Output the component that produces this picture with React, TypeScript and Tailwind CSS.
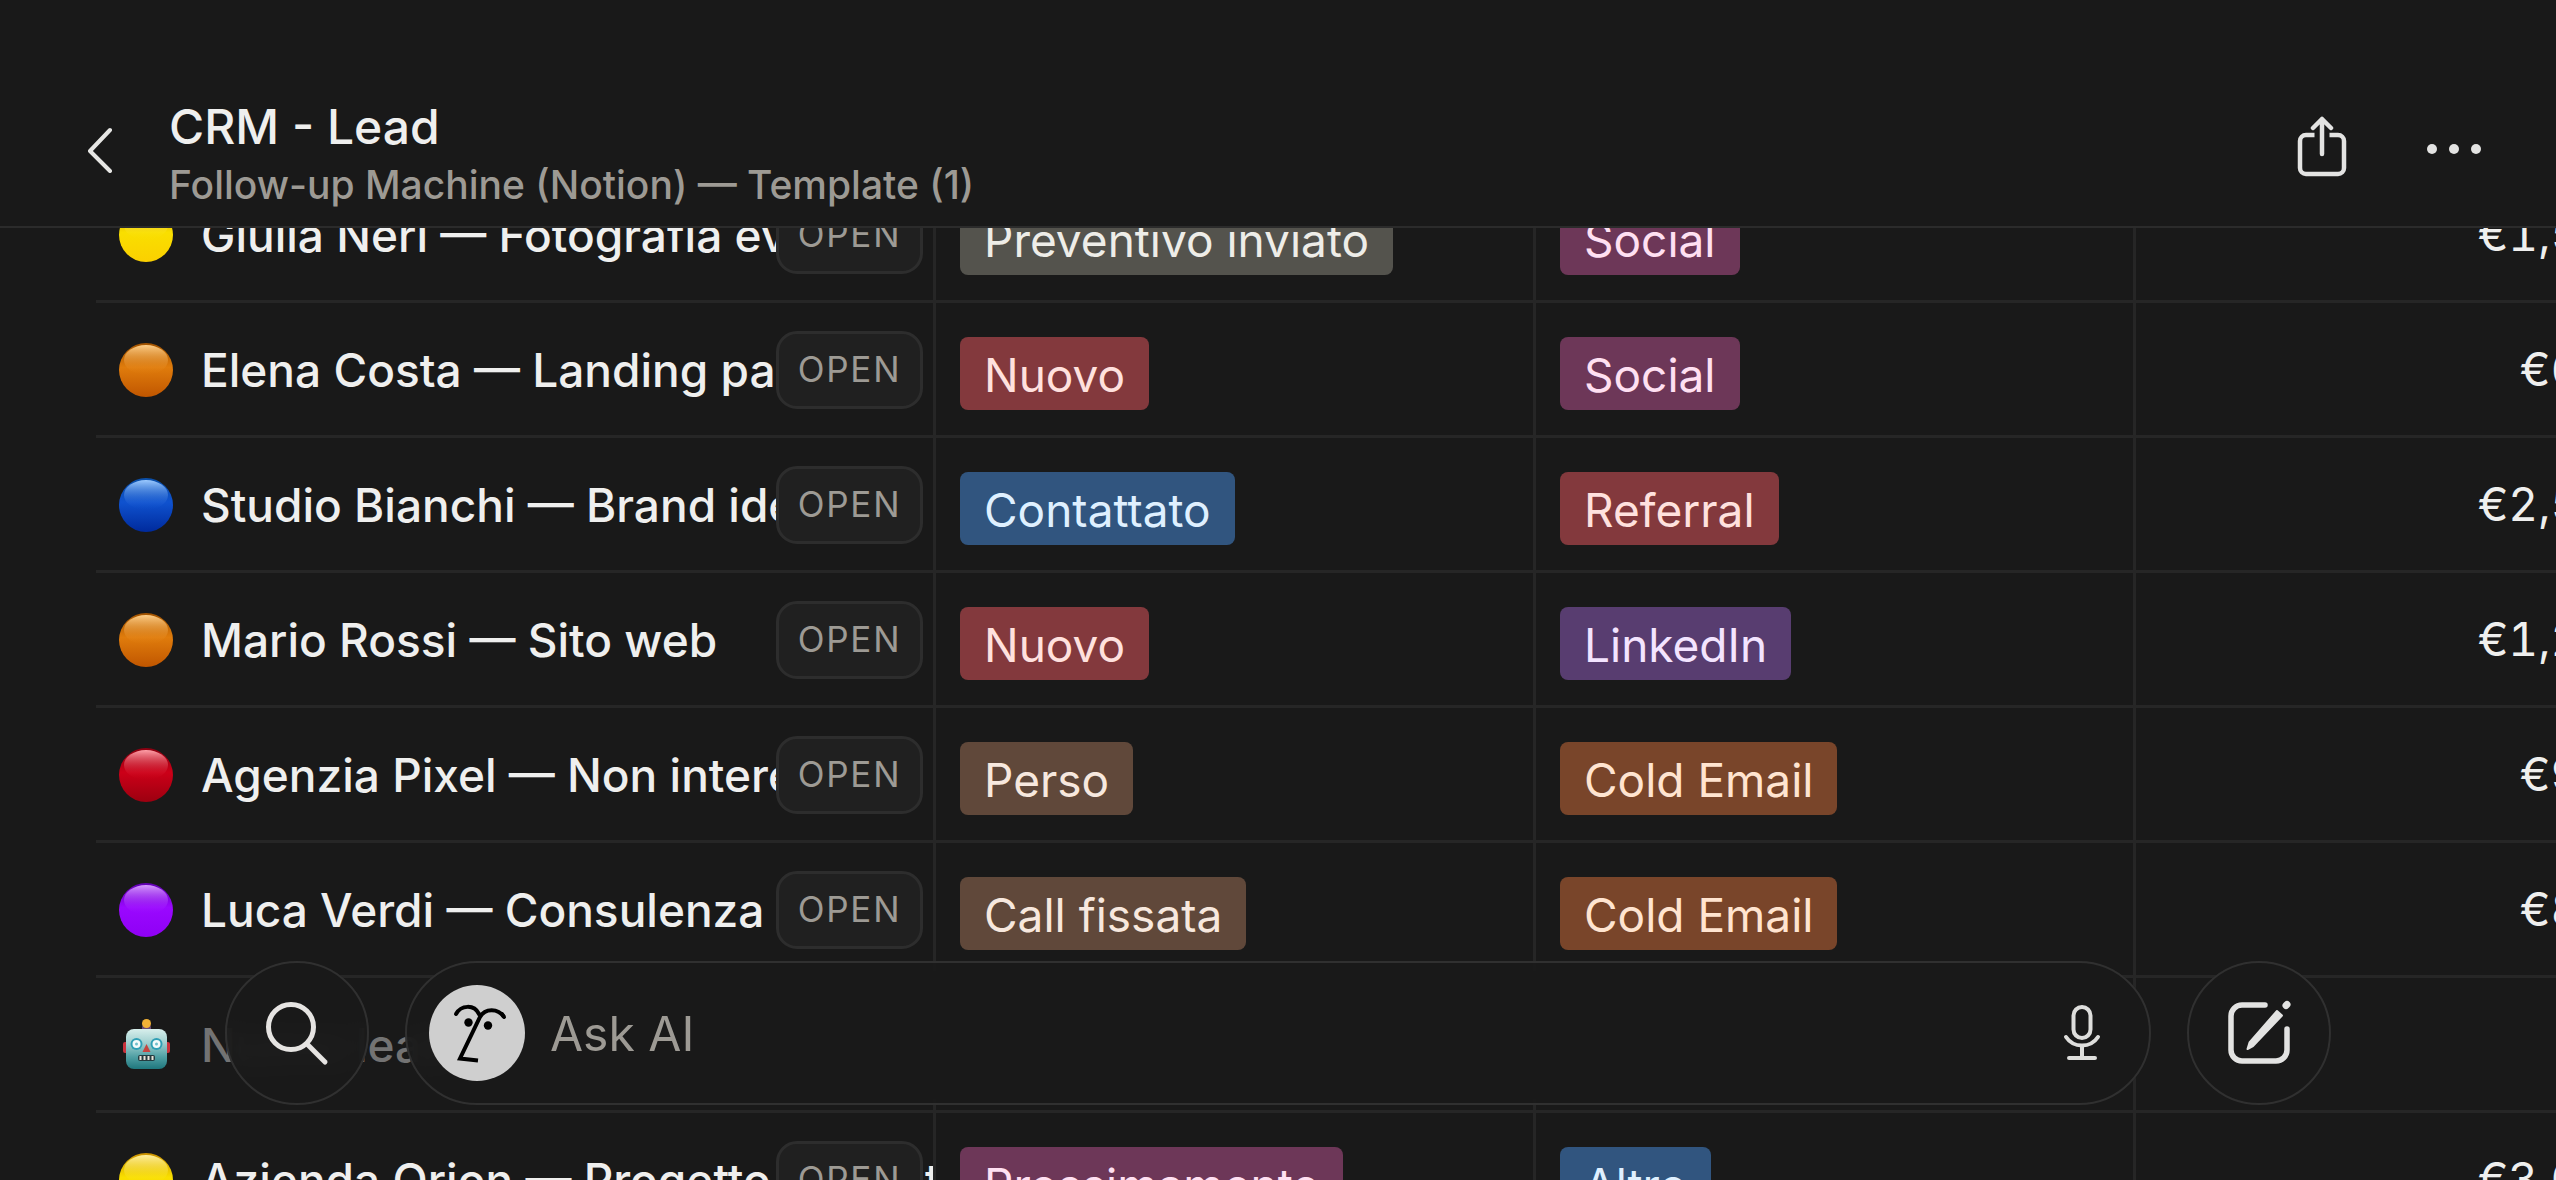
import React from "react";

type Dot = "yellow" | "orange" | "blue" | "red" | "purple";

const dotStops: Record<Dot, [string, string, string, string]> = {
  yellow: ["#c98f00", "#fff0a0", "#f9df00", "#fbd000"],
  orange: ["#a05200", "#ffd08a", "#e07c0c", "#c05600"],
  blue: ["#0a4fa8", "#9ccaff", "#0f52cf", "#002a9c"],
  red: ["#8a0010", "#ffa0a8", "#cc0018", "#9c0010"],
  purple: ["#5f00b0", "#d79cff", "#9a08ff", "#8f00f5"],
};

function Ball({ color }: { color: Dot }) {
  const [rim, shine, body, base] = dotStops[color];
  return (
    <svg viewBox="0 0 54 54" className="size-[54px] shrink-0" aria-hidden="true">
      <defs>
        <linearGradient id={`body-${color}`} x1="0" y1="0" x2="0" y2="1">
          <stop offset="0" stopColor={rim} />
          <stop offset="0.45" stopColor={body} />
          <stop offset="1" stopColor={base} />
        </linearGradient>
        <linearGradient id={`shine-${color}`} x1="0" y1="0" x2="0" y2="1">
          <stop offset="0" stopColor={shine} />
          <stop offset="1" stopColor={body} stopOpacity="0" />
        </linearGradient>
      </defs>
      <circle cx="27" cy="27" r="27" fill={`url(#body-${color})`} />
      <ellipse cx="27" cy="17" rx="22" ry="15" fill={`url(#shine-${color})`} />
    </svg>
  );
}

function Robot() {
  return (
    <svg viewBox="0 0 54 54" className="size-[54px] shrink-0" aria-hidden="true">
      <defs>
        <linearGradient id="robot-face" x1="0" y1="0" x2="0" y2="1">
          <stop offset="0" stopColor="#d8efec" />
          <stop offset="0.35" stopColor="#9fcfcf" />
          <stop offset="0.7" stopColor="#4f9fa3" />
          <stop offset="1" stopColor="#1f777d" />
        </linearGradient>
      </defs>
      <rect x="23" y="7" width="9" height="6" rx="2" fill="#6a4a72" />
      <circle cx="27.500" cy="5.500" r="4.500" fill="#f2b236" />
      <rect x="4" y="24" width="5" height="11" rx="2" fill="#c8323c" />
      <rect x="46" y="24" width="5" height="11" rx="2" fill="#c8323c" />
      <rect x="7" y="11" width="41" height="40" rx="8" fill="url(#robot-face)" />
      <circle cx="17.500" cy="26" r="6" fill="#2f9fb5" />
      <circle cx="37.500" cy="26" r="6" fill="#2f9fb5" />
      <circle cx="17.500" cy="26" r="4" fill="#f3fbfb" />
      <circle cx="37.500" cy="26" r="4" fill="#f3fbfb" />
      <circle cx="17.500" cy="26" r="1.500" fill="#6fc0cc" />
      <circle cx="37.500" cy="26" r="1.500" fill="#6fc0cc" />
      <path d="M27.500 26l4 8h-8z" fill="#c5453f" />
      <rect x="19" y="37" width="17" height="6" rx="2" fill="#243c40" />
      <path d="M21.500 38v4M25.500 38v4M29.500 38v4M33.500 38v4" stroke="#e9e4d8" strokeWidth="2" />
    </svg>
  );
}

type TagColor = "gray" | "red" | "blue" | "brown" | "orange" | "pink" | "purple";

const tagClass: Record<TagColor, string> = {
  gray: "bg-[#54534d] text-[#eeede8]",
  red: "bg-[#83393d] text-[#ffe1de]",
  blue: "bg-[#31557f] text-[#dff0ff]",
  brown: "bg-[#60483a] text-[#f7e8de]",
  orange: "bg-[#79452a] text-[#ffe4d0]",
  pink: "bg-[#6d3758] text-[#ffe0f2]",
  purple: "bg-[#583d70] text-[#f3e4ff]",
};

function Tag({ color, children }: { color: TagColor; children: React.ReactNode }) {
  return (
    <span
      className={`inline-flex h-[73px] items-center whitespace-nowrap rounded-lg px-6 pt-0.5 text-[46px] leading-none ${tagClass[color]}`}
    >
      {children}
    </span>
  );
}

interface Lead {
  icon: Dot | "robot";
  name: string;
  status?: [TagColor, string];
  source?: [TagColor, string];
  value?: string;
  muted?: boolean;
}

const leads: Lead[] = [
  { icon: "yellow", name: "Giulia Neri — Fotografia ev", status: ["gray", "Preventivo inviato"], source: ["pink", "Social"], value: "€1,500.00" },
  { icon: "orange", name: "Elena Costa — Landing pa", status: ["red", "Nuovo"], source: ["pink", "Social"], value: "€600.00" },
  { icon: "blue", name: "Studio Bianchi — Brand ide", status: ["blue", "Contattato"], source: ["red", "Referral"], value: "€2,500.00" },
  { icon: "orange", name: "Mario Rossi — Sito web", status: ["red", "Nuovo"], source: ["purple", "LinkedIn"], value: "€1,200.00" },
  { icon: "red", name: "Agenzia Pixel — Non intere", status: ["brown", "Perso"], source: ["orange", "Cold Email"], value: "€900.00" },
  { icon: "purple", name: "Luca Verdi — Consulenza", status: ["brown", "Call fissata"], source: ["orange", "Cold Email"], value: "€800.00" },
  { icon: "robot", name: "Nuovo lead", muted: true },
  { icon: "yellow", name: "Azienda Orion — Progetto su mist", status: ["pink", "Prossimamente"], source: ["blue", "Altro"], value: "€3,000.00" },
];

function LeadRow({ lead }: { lead: Lead }) {
  return (
    <tr className="h-[135px]">
      <td className="overflow-hidden border-r-[3px] border-b-[3px] border-[#262626] p-0">
        <div className="relative flex items-center gap-7 pt-px pl-[23px]">
          {lead.icon === "robot" ? <Robot /> : <Ball color={lead.icon} />}
          <span className={`whitespace-nowrap text-[46px] leading-none font-medium ${lead.muted ? "text-[#737373]" : "text-[#efefee]"}`}>
            {lead.name}
          </span>
          {!lead.muted && (
            <button
              type="button"
              className="absolute right-[10px] flex h-[78px] w-[147px] items-center justify-center rounded-[21px] border-[3px] border-[#2d2d2d] bg-[#202020] text-[35px] tracking-wider text-[#9d9a94]"
            >
              OPEN
            </button>
          )}
        </div>
      </td>
      <td className="border-r-[3px] border-b-[3px] border-[#262626] px-6 py-0 align-middle">
        <div className="flex pt-[9px]">{lead.status && <Tag color={lead.status[0]}>{lead.status[1]}</Tag>}</div>
      </td>
      <td className="border-r-[3px] border-b-[3px] border-[#262626] px-6 py-0 align-middle">
        <div className="flex pt-[9px]">{lead.source && <Tag color={lead.source[0]}>{lead.source[1]}</Tag>}</div>
      </td>
      <td className="border-b-[3px] border-[#262626] px-6 py-0 text-right text-[46px] leading-none tabular-nums text-[#efefee]">
        {lead.value}
      </td>
    </tr>
  );
}

const glass =
  "border-2 border-[#303030] bg-[#191919]/90 backdrop-blur-md pointer-events-auto";

export default function App() {
  return (
    <div className="relative flex h-screen flex-col overflow-hidden bg-[#191919] font-['Inter','Liberation_Sans',sans-serif] text-[#e6e6e4]">
      <header className="z-10 flex shrink-0 items-center border-b-2 border-[#2b2b2b] bg-[#191919] pt-[98px] pr-[72px] pb-[18px] pl-[84px]">
        <button type="button" aria-label="Indietro" className="mr-[53px] pb-2">
          <svg viewBox="0 0 32 48" className="h-[48px] w-[32px]" fill="none" stroke="#e6e6e4" strokeWidth="4" strokeLinecap="round" strokeLinejoin="round">
            <path d="M26 5L6 26L26 46" />
          </svg>
        </button>
        <div className="min-w-0 flex-1">
          <h1 className="text-[48px] leading-[57px] font-medium text-[#efefee]">CRM - Lead</h1>
          <p className="pt-1.5 text-[39px] leading-[47px] font-medium text-[#9d9a94]">Follow-up Machine (Notion) — Template (1)</p>
        </div>
        <button type="button" aria-label="Condividi" className="mr-[76px] pb-3">
          <svg viewBox="0 0 52 62" className="h-[62px] w-[52px]" fill="none" stroke="#e3e3e2" strokeWidth="4.500" strokeLinecap="round" strokeLinejoin="round">
            <path d="M18.500 19H10a6 6 0 0 0-6 6v27a6 6 0 0 0 6 6h32a6 6 0 0 0 6-6V25a6 6 0 0 0-6-6h-8.500" strokeLinecap="butt" />
            <path d="M26 38V3M17 12L26 3l9 9" />
          </svg>
        </button>
        <button type="button" aria-label="Altro" className="pb-2">
          <svg viewBox="0 0 60 12" className="h-[12px] w-[60px]" fill="#e3e3e2">
            <circle cx="8" cy="6" r="5" />
            <circle cx="30" cy="6" r="5" />
            <circle cx="52" cy="6" r="5" />
          </svg>
        </button>
      </header>

      <main className="min-h-0 flex-1 overflow-hidden">
        <table className="-mt-[60px] ml-[96px] w-[2640px] table-fixed border-separate border-spacing-0">
          <colgroup>
            <col className="w-[840px]" />
            <col className="w-[600px]" />
            <col className="w-[600px]" />
            <col className="w-[600px]" />
          </colgroup>
          <tbody>
            {leads.map((lead) => (
              <LeadRow key={lead.name} lead={lead} />
            ))}
          </tbody>
        </table>
      </main>

      <div className="pointer-events-none absolute inset-x-0 bottom-[75px] z-20 flex h-[144px] gap-[36px] px-[225px]">
        <button type="button" aria-label="Cerca" className={`flex size-[144px] shrink-0 items-center justify-center rounded-full ${glass}`}>
          <svg viewBox="0 0 68 68" className="size-[68px]" fill="none" stroke="#e6e4e2" strokeWidth="5" strokeLinecap="round">
            <circle cx="28" cy="28" r="22.500" />
            <path d="M44 45L62 63" />
          </svg>
        </button>
        <div className={`flex min-w-0 flex-1 items-center rounded-full pr-[45px] pl-[22px] ${glass}`}>
          <svg viewBox="0 0 96 96" className="size-[96px] shrink-0" aria-hidden="true">
            <circle cx="48" cy="48" r="48" fill="#cfcfcf" />
            <g fill="none" stroke="#000" strokeWidth="4">
              <path d="M27 29C32 20 45 19 50 29" strokeLinecap="round" />
              <path d="M75 32C69 23 56 23 51 32L31 73.500L49 75.500" />
              <path d="M73 29L75 32" strokeLinecap="round" />
            </g>
            <circle cx="39.500" cy="37.500" r="4.200" />
            <circle cx="59" cy="40.500" r="4.200" />
          </svg>
          <input
            type="text"
            aria-label="Ask AI"
            placeholder="Ask AI"
            className="ml-[25px] min-w-0 flex-1 bg-transparent pt-0.5 text-[48px] text-[#efefee] outline-none placeholder:text-[#9d9a94] placeholder:opacity-100"
          />
          <button type="button" aria-label="Dettatura">
            <svg viewBox="0 0 44 62" className="h-[62px] w-[44px]" fill="none" stroke="#dededc" strokeWidth="4" strokeLinecap="round">
              <rect x="13.500" y="5" width="17" height="31" rx="8.500" />
              <path d="M6 35C10 41 16 43.500 22 43.500S34 41 38 35M22 44V55M9 56H35" />
            </svg>
          </button>
        </div>
        <button type="button" aria-label="Nuova pagina" className={`flex size-[144px] shrink-0 items-center justify-center rounded-full ${glass}`}>
          <svg viewBox="0 0 68 68" className="size-[68px]" fill="none" stroke="#e3e3e2" strokeLinecap="round" strokeLinejoin="round">
            <path d="M40 6H17a11 11 0 0 0-11 11V51a11 11 0 0 0 11 11H51a11 11 0 0 0 11-11V30" strokeWidth="5.500" />
            <path d="M52 12L57 16.500L28 47L22.500 50L24.500 43.500Z" fill="#e3e3e2" strokeWidth="2" />
            <path d="M61 6.500L62 5.500" strokeWidth="7" />
          </svg>
        </button>
      </div>
    </div>
  );
}
